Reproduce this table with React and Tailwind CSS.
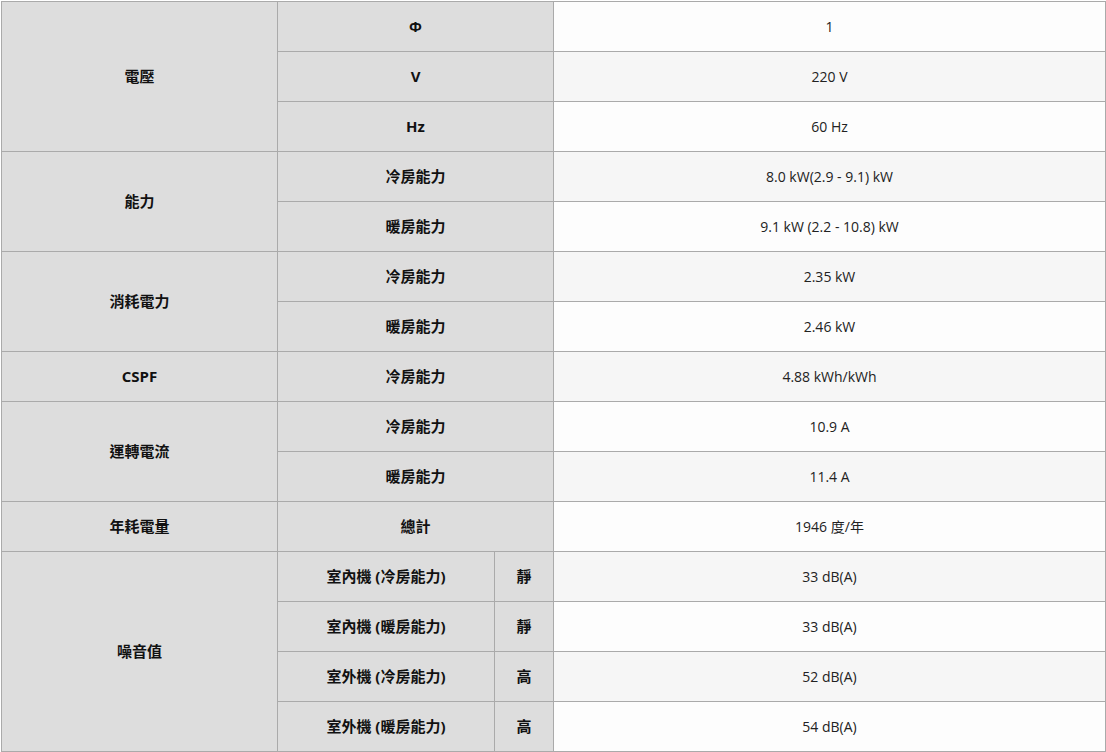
const rows = [
  { group: '電壓', span: 3, label: 'Φ', value: '1' },
  { label: 'V', value: '220 V' },
  { label: 'Hz', value: '60 Hz' },
  { group: '能力', span: 2, label: '冷房能力', value: '8.0 kW(2.9 - 9.1) kW' },
  { label: '暖房能力', value: '9.1 kW (2.2 - 10.8) kW' },
  { group: '消耗電力', span: 2, label: '冷房能力', value: '2.35 kW' },
  { label: '暖房能力', value: '2.46 kW' },
  { group: 'CSPF', span: 1, label: '冷房能力', value: '4.88 kWh/kWh' },
  { group: '運轉電流', span: 2, label: '冷房能力', value: '10.9 A' },
  { label: '暖房能力', value: '11.4 A' },
  { group: '年耗電量', span: 1, label: '總計', value: '1946 度/年' },
  { group: '噪音值', span: 4, label: '室內機 (冷房能力)', sub: '靜', value: '33 dB(A)' },
  { label: '室內機 (暖房能力)', sub: '靜', value: '33 dB(A)' },
  { label: '室外機 (冷房能力)', sub: '高', value: '52 dB(A)' },
  { label: '室外機 (暖房能力)', sub: '高', value: '54 dB(A)' },
];

const head = 'border border-[#aaaaaa] bg-[#dddddd] pb-[1px] text-center text-[15px] font-bold text-[#111]';

export default function App() {
  return (
    <div className="bg-white p-[1px]" style={{ fontFamily: '"Open Sans", "Noto Sans CJK TC", sans-serif' }}>
      <table className="w-[1104px] table-fixed border-collapse text-[14px]">
        <colgroup>
          <col className="w-[276px]" />
          <col className="w-[217px]" />
          <col className="w-[59px]" />
          <col className="w-[552px]" />
        </colgroup>
        <tbody>
          {rows.map((r, i) => (
            <tr key={i} className="h-[50px]">
              {r.group && (
                <td rowSpan={r.span} className={head}>{r.group}</td>
              )}
              {r.sub ? (
                <>
                  <td className={head}>{r.label}</td>
                  <td className={head}>{r.sub}</td>
                </>
              ) : (
                <td colSpan={2} className={head}>{r.label}</td>
              )}
              <td className={`border border-[#aaaaaa] pb-[1px] text-center text-[#222] ${i % 2 === 1 ? 'bg-[#f6f6f6]' : 'bg-[#fdfdfd]'}`}>
                {r.value}
              </td>
            </tr>
          ))}
        </tbody>
      </table>
    </div>
  );
}
